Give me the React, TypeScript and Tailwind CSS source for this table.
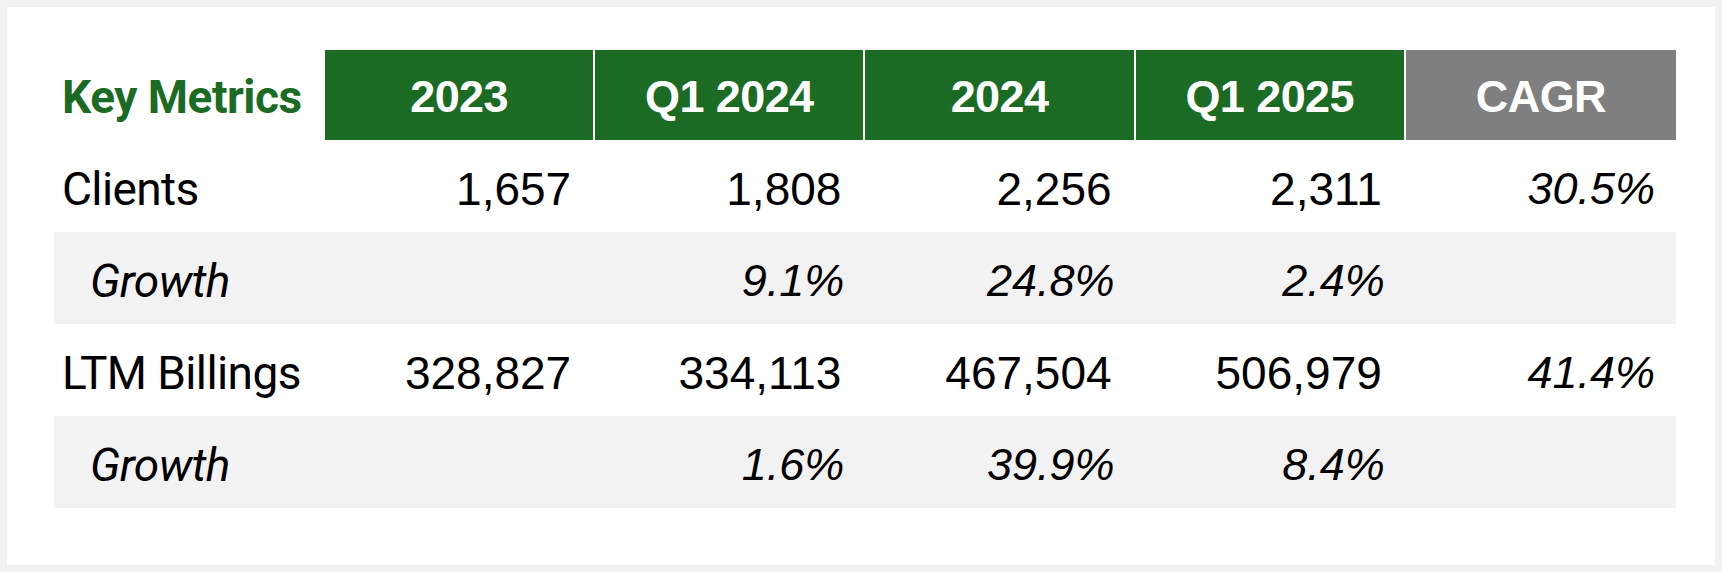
import React from "react";

const cols = ["2023", "Q1 2024", "2024", "Q1 2025"];

type Row = { label: string; values: string[]; cagr: string; growth: boolean };

const rows: Row[] = [
  { label: "Clients", values: ["1,657", "1,808", "2,256", "2,311"], cagr: "30.5%", growth: false },
  { label: "Growth", values: ["", "9.1%", "24.8%", "2.4%"], cagr: "", growth: true },
  { label: "LTM Billings", values: ["328,827", "334,113", "467,504", "506,979"], cagr: "41.4%", growth: false },
  { label: "Growth", values: ["", "1.6%", "39.9%", "8.4%"], cagr: "", growth: true },
];

function Label({ row }: { row: Row }) {
  return (
    <div
      className={`h-[92px] flex items-center pt-[6px] font-['Roboto','Noto_Sans',sans-serif] text-[46px] tracking-[-0.6px] text-black ${
        row.growth ? "bg-[#f2f2f2] pl-[36px] italic" : "bg-white pl-[8px]"
      }`}
    >
      {row.label}
    </div>
  );
}

function Value({ value, italic, bg }: { value: string; italic: boolean; bg: string }) {
  return (
    <div
      className={`h-[92px] flex items-center justify-end pt-[6px] font-['Liberation_Sans',Arial,sans-serif] text-black ${bg} ${
        italic ? "italic text-[45px] pr-[21px]" : "text-[46px] pr-[24px]"
      }`}
    >
      {value}
    </div>
  );
}

export default function App() {
  return (
    <div className="w-[1722px] h-[572px] bg-[#f2f2f2] p-[7px]">
      <div className="h-full bg-white pl-[47px] pr-[39px] pt-[43px]">
        <div className="grid grid-cols-[271px_repeat(5,1fr)]">
          <div className="h-[90px] flex items-center pl-[8px] pt-[4px] font-['Roboto','Noto_Sans',sans-serif] text-[46px] font-bold tracking-[-0.5px] text-[#1b6b24]">
            Key Metrics
          </div>
          {cols.map((c) => (
            <div
              key={c}
              className="h-[90px] flex items-center justify-center bg-[#1b6b24] border-r-2 border-white pt-[3px] font-['Liberation_Sans',Arial,sans-serif] text-[45px] font-bold tracking-[-0.6px] text-white"
            >
              {c}
            </div>
          ))}
          <div className="h-[90px] flex items-center justify-center bg-[#7f7f7f] pt-[3px] font-['Liberation_Sans',Arial,sans-serif] text-[45px] font-bold tracking-[-0.6px] text-white">
            CAGR
          </div>

          {rows.map((r, i) => {
            const bg = r.growth ? "bg-[#f2f2f2]" : "bg-white";
            return (
              <React.Fragment key={i}>
                <Label row={r} />
                {r.values.map((v, j) => (
                  <Value key={j} value={v} italic={r.growth} bg={bg} />
                ))}
                <Value value={r.cagr} italic={true} bg={bg} />
              </React.Fragment>
            );
          })}
        </div>
      </div>
    </div>
  );
}
